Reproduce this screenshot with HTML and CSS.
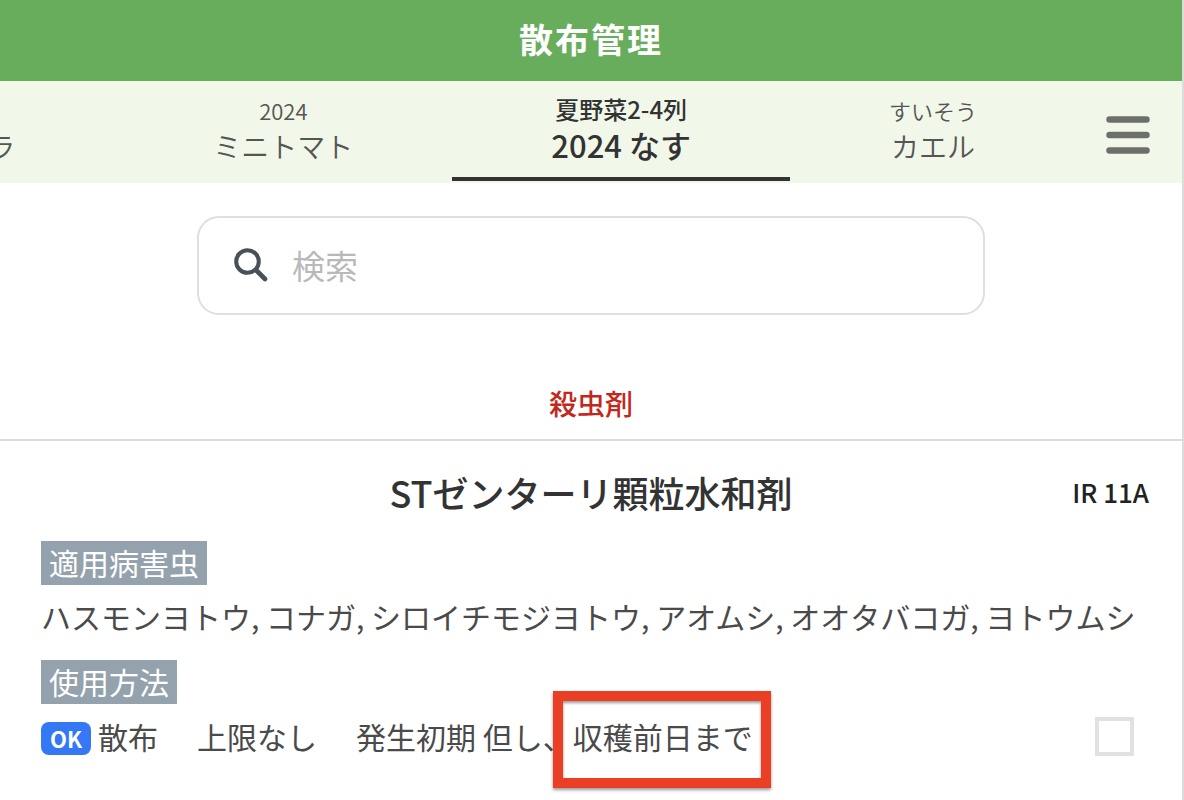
FILE: index.html
```html
<!DOCTYPE html>
<html lang="ja">
<head>
    <meta charset="UTF-8">
    <meta name="viewport" content="width=device-width, initial-scale=1.0">
    <title>散布管理</title>
    <link rel="stylesheet" href="styles.css">
</head>
<body>

<header class="title">
    <h1>散布管理</h1>
</header>

<!-- 畑の切り替えタブ -->
<nav class="tab-bar">
    <div class="tabs">
        <button class="tab"><small>&nbsp;</small><span>オクラ</span></button>
        <button class="tab"><small>2024</small><span>ミニトマト</span></button>
        <button class="tab active"><small>夏野菜2-4列</small><span>2024 なす</span></button>
        <button class="tab"><small>すいそう</small><span>カエル</span></button>
    </div>
    <button class="menu-button" aria-label="メニュー">
        <svg width="44" height="38" viewBox="0 0 44 38">
            <path d="M3.5 3.5h37M3.5 19h37M3.5 34.5h37" stroke="#6d706a" stroke-width="6.500" stroke-linecap="round"/>
        </svg>
    </button>
</nav>

<main>
    <label class="search">
        <svg width="34" height="34" viewBox="0 0 34 34" fill="none" stroke="#495057" stroke-width="4" stroke-linecap="round">
            <circle cx="13.5" cy="13.5" r="11.3"/>
            <path d="M22 22l9 9" stroke-width="4.6"/>
        </svg>
        <input type="search" placeholder="検索" aria-label="検索">
    </label>

    <h2 class="category">殺虫剤</h2>

    <section class="item">
        <div class="item-head">
            <h3>STゼンターリ顆粒水和剤</h3>
            <span class="code">IR 11A</span>
        </div>
        <h4 class="tag">適用病害虫</h4>
        <p class="pests">ハスモンヨトウ, コナガ, シロイチモジヨトウ, アオムシ, オオタバコガ, ヨトウムシ</p>
        <h4 class="tag">使用方法</h4>
        <div class="usage">
            <span class="ok">OK</span>
            <label for="use1">散布</label>
            <span class="limit">上限なし</span>
            <span>発生初期 但し、<span class="mark">収穫前日まで</span></span>
            <input type="checkbox" id="use1">
        </div>
    </section>
</main>

</body>
</html>
```

FILE: styles.css
```css
* {
    box-sizing: border-box;
}
body {
    margin: 0;
    min-height: 100vh;
    border-right: 2px solid #dcdcdc;
    background-color: #fff;
    color: #4a4a4a;
    font-family: "Noto Sans CJK JP", sans-serif;
    font-size: 30px;
    line-height: 42px;
    overflow: hidden;
}
h1, h2, h3, h4, p {
    margin: 0;
}
button {
    border: none;
    background: none;
    font-family: inherit;
    cursor: pointer;
}

/* ヘッダー */
.title {
    padding: 15px 16px 19px;
    background-color: #68ad5c;
    color: #fff;
    text-align: center;
}
.title h1 {
    font-size: 34px;
    font-weight: 700;
    line-height: 47px;
    letter-spacing: 2px;
}

/* タブ */
.tab-bar {
    display: flex;
    height: 102px;
    background-color: #f1f7e9;
}
.tabs {
    display: flex;
    flex: 1;
    justify-content: flex-end;
    min-width: 0;
    overflow: hidden;
}
.tab {
    display: flex;
    flex: none;
    flex-direction: column;
    align-items: center;
    margin-bottom: 2px;
    padding: 11px 99px 0;
    border-bottom: 4px solid transparent;
    color: #555;
    font-size: 28px;
    font-weight: 350;
    line-height: 36px;
    white-space: nowrap;
}
.tab small {
    font-size: 22px;
    line-height: 36px;
}
.tab.active {
    padding-top: 10px;
    border-color: #333;
    color: #333;
    font-size: 31px;
    font-weight: 500;
}
.tab.active small {
    font-size: 24px;
}
.menu-button {
    width: 106px;
    padding: 6px 32px 0 30px;
}
.menu-button svg {
    display: block;
}

/* 検索 */
.search {
    display: flex;
    align-items: center;
    gap: 24px;
    width: 788px;
    max-width: 90%;
    height: 99px;
    margin: 33px auto 0;
    padding: 0 35px 2px;
    border: 2px solid #dedee3;
    border-radius: 22px;
}
.search input {
    flex: 1;
    min-width: 0;
    padding: 0;
    border: none;
    outline: none;
    font-family: inherit;
    font-size: 33px;
}
.search input::placeholder {
    color: #b9b9b9;
}

.category {
    padding: 67px 0 15px;
    border-bottom: 2px solid #dcdcdc;
    color: #c3281c;
    font-size: 28px;
    font-weight: 500;
    text-align: center;
}

/* 農薬 */
.item {
    padding: 30px 33px 30px 41px;
}
.item-head {
    display: grid;
    grid-template-columns: 1fr auto 1fr;
    align-items: center;
    margin: 0 0 28px -8px;
}
.item-head h3 {
    grid-column: 2;
    color: #333;
    font-size: 36px;
    font-weight: 500;
}
.code {
    color: #222;
    font-size: 26px;
    font-weight: 500;
    text-align: right;
}
.tag {
    width: fit-content;
    padding: 0 8px 2px;
    background-color: #94a2ad;
    color: #fff;
    font-weight: 400;
}
.pests {
    margin: 10px 0 23px;
}
.usage {
    display: flex;
    align-items: center;
    margin-top: 11px;
}
.ok {
    margin: 4px 7px 0 0;
    padding: 0 9px;
    border-radius: 8px;
    background-color: #3478f6;
    color: #fff;
    font-size: 22px;
    font-weight: 700;
    line-height: 33px;
}
.limit {
    margin: 0 39px;
}
.mark {
    position: relative;
}
/* 注意書きを囲む赤枠 */
.mark::after {
    content: "";
    position: absolute;
    inset: -23px -18px -30px -20px;
    border: 10px solid #ea3f25;
    box-shadow: 0 2px 3px rgba(0, 0, 0, 0.4), inset 0 2px 3px rgba(0, 0, 0, 0.4);
}
.usage input {
    appearance: none;
    width: 39px;
    height: 39px;
    margin: 0 15px 0 auto;
    border: 4px solid #e1e1e1;
    background-color: #fff;
}
```
